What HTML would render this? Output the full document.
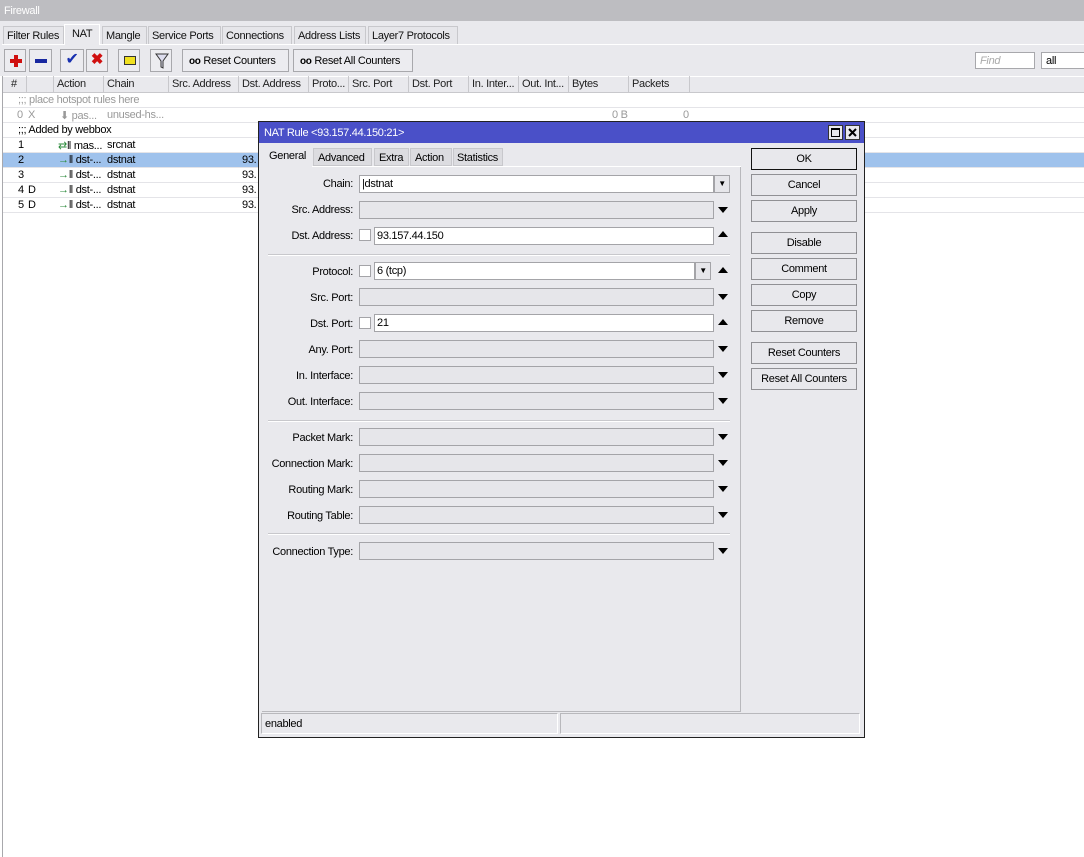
<!DOCTYPE html>
<html><head><meta charset="utf-8"><style>
*{box-sizing:border-box;margin:0;padding:0}
body{width:1084px;height:857px;position:relative;overflow:hidden;background:#fff;font-family:"Liberation Sans",sans-serif;font-size:11px;letter-spacing:-0.3px;color:#000}
div,span{white-space:nowrap}
.a{position:absolute;white-space:nowrap}
.tab{position:absolute;top:26px;height:18px;border:1px solid #c8c8cc;border-bottom:none;background:#e6e6ea;padding:3px 3px;color:#111;overflow:hidden}
.btn{position:absolute;top:49px;height:23px;border:1px solid #a8a8ac;background:#ececf0;overflow:hidden}
.th{position:absolute;top:76px;height:17px;border-right:1px solid #c8c8cc;padding:2px 3px;color:#222;overflow:hidden}
.row{position:absolute;left:3px;width:1081px;height:15px;border-bottom:1px solid #e4e4e8}
.c{position:absolute;top:1px}
.dlbl{position:absolute;width:93px;left:260px;text-align:right}
.inp{position:absolute;left:359px;width:355px;height:18px;border:1px solid #a4a4a8;background:#e6e6ea}
.inp.w{background:#fff}
.arr{position:absolute;left:718px;width:0;height:0;border-left:5px solid transparent;border-right:5px solid transparent}
.dn{border-top:6px solid #000}
.up{border-bottom:6px solid #000}
.dbtn{position:absolute;left:751px;width:106px;height:22px;border:1px solid #909094;background:#e8e8ec;text-align:center;line-height:20px}
.sep{position:absolute;left:268px;width:462px;height:2px;border-top:1px solid #c8c8cc;border-bottom:1px solid #fff}
.cb{position:absolute;left:359px;width:12px;height:12px;border:1px solid #a4a4a8;background:#fff}
.dd{position:absolute;width:16px;height:18px;border:1px solid #a4a4a8;background:#e6e6ea;font-size:8px;text-align:center;line-height:16px}
</style></head><body>
<div class="a" style="left:0;top:0;width:1084px;height:21px;background:#bdbdc1;color:#fff;padding:5px 4px">Firewall</div>
<div class="a" style="left:0;top:21px;width:1084px;height:55px;background:#e9e9ed"></div>
<div class="a" style="left:2px;top:44px;width:1082px;height:1px;background:#fff"></div>
<div class="tab" style="left:3px;width:61px">Filter Rules</div>
<div class="tab" style="left:64px;top:24px;height:21px;width:36px;background:#e9e9ed;border-color:#fff;padding-left:7px">NAT</div>
<div class="tab" style="left:102px;width:45px">Mangle</div>
<div class="tab" style="left:148px;width:73px">Service Ports</div>
<div class="tab" style="left:222px;width:70px">Connections</div>
<div class="tab" style="left:294px;width:72px">Address Lists</div>
<div class="tab" style="left:368px;width:90px">Layer7 Protocols</div>

<div class="btn" style="left:4px;width:22px"><div class="a" style="left:5px;top:9px;width:12px;height:4px;background:#d01010"></div><div class="a" style="left:9px;top:5px;width:4px;height:12px;background:#d01010"></div></div>
<div class="btn" style="left:29px;width:23px"><div class="a" style="left:5px;top:9px;width:12px;height:4px;background:#1828a0"></div></div>
<div class="btn" style="left:60px;width:24px;color:#1830b0;font-size:16px;text-align:center;line-height:20px">✔</div>
<div class="btn" style="left:86px;width:22px;color:#d01010;font-size:15px;text-align:center;line-height:20px;font-weight:bold">✖</div>
<div class="btn" style="left:118px;width:22px"><div class="a" style="left:5px;top:6px;width:12px;height:9px;background:#f0e020;border:1px solid #333"></div></div>
<div class="btn" style="left:150px;width:22px"><svg class="a" style="left:4px;top:3px" width="14" height="16"><path d="M1 1H13L8 8V15L6 14V8Z" fill="#dde" stroke="#333"/></svg></div>
<div class="btn" style="left:182px;width:107px;padding:5px 6px"><b style="font-size:10px">oo</b> Reset Counters</div>
<div class="btn" style="left:293px;width:120px;padding:5px 6px"><b style="font-size:10px">oo</b> Reset All Counters</div>
<div class="a" style="left:975px;top:52px;width:60px;height:17px;border:1px solid #a8a8ac;background:#fff;color:#aaa;font-style:italic;padding:2px 4px">Find</div>
<div class="a" style="left:1041px;top:52px;width:50px;height:17px;border:1px solid #a8a8ac;background:#fff;padding:2px 4px">all</div>

<div class="a" style="left:3px;top:76px;width:1081px;height:17px;background:#e9e9ed;border-top:1px solid #fff;border-bottom:1px solid #c8c8cc"></div>
<div class="th" style="left:3px;width:24px;padding-left:8px">#</div>
<div class="th" style="left:27px;width:27px"></div>
<div class="th" style="left:54px;width:50px">Action</div>
<div class="th" style="left:104px;width:65px">Chain</div>
<div class="th" style="left:169px;width:70px">Src. Address</div>
<div class="th" style="left:239px;width:70px">Dst. Address</div>
<div class="th" style="left:309px;width:40px">Proto...</div>
<div class="th" style="left:349px;width:60px">Src. Port</div>
<div class="th" style="left:409px;width:60px">Dst. Port</div>
<div class="th" style="left:469px;width:50px">In. Inter...</div>
<div class="th" style="left:519px;width:50px">Out. Int...</div>
<div class="th" style="left:569px;width:60px">Bytes</div>
<div class="th" style="left:629px;width:61px">Packets</div>
<div class="a" style="left:2px;top:76px;width:1px;height:781px;background:#a8a8ac"></div>

<div class="row" style="top:93px;color:#999"><span class="c" style="left:15px">;;; place hotspot rules here</span></div>
<div class="row" style="top:108px;color:#999"><span class="c" style="left:14px">0</span><span class="c" style="left:25px">X</span><span class="c" style="left:57px">⬇ pas...</span><span class="c" style="left:104px">unused-hs...</span><span class="c" style="left:609px">0 B</span><span class="c" style="left:680px">0</span></div>
<div class="row" style="top:123px"><span class="c" style="left:15px">;;; Added by webbox</span></div>
<div class="row" style="top:138px"><span class="c" style="left:15px">1</span><span class="c" style="left:55px"><span style="color:#2a8a3a">⇄</span>‖ mas...</span><span class="c" style="left:104px">srcnat</span></div>
<div class="row" style="top:153px;background:#9fc2ec"><span class="c" style="left:15px">2</span><span class="c" style="left:55px"><span style="color:#2a8a3a">→</span>‖ dst-...</span><span class="c" style="left:104px">dstnat</span><span class="c" style="left:239px">93.</span></div>
<div class="row" style="top:168px"><span class="c" style="left:15px">3</span><span class="c" style="left:55px"><span style="color:#2a8a3a">→</span>‖ dst-...</span><span class="c" style="left:104px">dstnat</span><span class="c" style="left:239px">93.</span></div>
<div class="row" style="top:183px"><span class="c" style="left:15px">4</span><span class="c" style="left:25px">D</span><span class="c" style="left:55px"><span style="color:#2a8a3a">→</span>‖ dst-...</span><span class="c" style="left:104px">dstnat</span><span class="c" style="left:239px">93.</span></div>
<div class="row" style="top:198px"><span class="c" style="left:15px">5</span><span class="c" style="left:25px">D</span><span class="c" style="left:55px"><span style="color:#2a8a3a">→</span>‖ dst-...</span><span class="c" style="left:104px">dstnat</span><span class="c" style="left:239px">93.</span></div>

<div class="a" style="left:258px;top:121px;width:607px;height:617px;background:#e9e9ed;border:1px solid #222"></div>
<div class="a" style="left:259px;top:122px;width:605px;height:21px;background:#4a50c8;color:#fff;padding:5px 5px">NAT Rule &lt;93.157.44.150:21&gt;</div>
<div class="a" style="left:828px;top:125px;width:15px;height:15px;background:#e9e9ed;border:1px solid #333"><div class="a" style="left:2px;top:2px;width:9px;height:9px;border:1px solid #000;border-top-width:2px"></div></div>
<div class="a" style="left:845px;top:125px;width:15px;height:15px;background:#e9e9ed;border:1px solid #333"><svg class="a" style="left:2px;top:2px" width="9" height="9"><path d="M1 1L8 8M8 1L1 8" stroke="#000" stroke-width="2"/></svg></div>

<div class="a" style="left:262px;top:166px;width:479px;height:546px;border:1px solid #b8b8bc;border-left:none;border-top:none"></div>
<div class="a" style="left:312px;top:166px;width:429px;height:1px;background:#fff"></div>
<div class="a" style="left:264px;top:146px;width:48px;height:21px;padding:4px 5px">General</div>
<div class="a" style="left:313px;top:148px;width:59px;height:18px;border:1px solid #c8c8cc;padding:3px 4px;background:#dcdce0">Advanced</div>
<div class="a" style="left:374px;top:148px;width:35px;height:18px;border:1px solid #c8c8cc;padding:3px 4px;background:#dcdce0">Extra</div>
<div class="a" style="left:410px;top:148px;width:42px;height:18px;border:1px solid #c8c8cc;padding:3px 4px;background:#dcdce0">Action</div>
<div class="a" style="left:453px;top:148px;width:50px;height:18px;border:1px solid #c8c8cc;padding:3px 3px;background:#dcdce0">Statistics</div>

<div class="dlbl" style="top:178px">Chain:</div><div class="inp w" style="top:175px;width:355px;padding:2px 2px">|dstnat</div><div class="dd" style="left:714px;top:175px">▼</div>
<div class="dlbl" style="top:204px">Src. Address:</div><div class="inp" style="top:201px"></div><div class="arr dn" style="top:207px"></div>
<div class="dlbl" style="top:230px">Dst. Address:</div><div class="cb" style="top:229px"></div><div class="inp w" style="left:374px;width:340px;top:227px;padding:2px 2px">93.157.44.150</div><div class="arr up" style="top:231px"></div>
<div class="sep" style="top:254px"></div>
<div class="dlbl" style="top:266px">Protocol:</div><div class="cb" style="top:265px"></div><div class="inp w" style="left:374px;width:321px;top:262px;padding:2px 2px">6 (tcp)</div><div class="dd" style="left:695px;top:262px">▼</div><div class="arr up" style="top:267px"></div>
<div class="dlbl" style="top:292px">Src. Port:</div><div class="inp" style="top:288px"></div><div class="arr dn" style="top:294px"></div>
<div class="dlbl" style="top:318px">Dst. Port:</div><div class="cb" style="top:317px"></div><div class="inp w" style="left:374px;width:340px;top:314px;padding:2px 2px">21</div><div class="arr up" style="top:319px"></div>
<div class="dlbl" style="top:344px">Any. Port:</div><div class="inp" style="top:340px"></div><div class="arr dn" style="top:346px"></div>
<div class="dlbl" style="top:370px">In. Interface:</div><div class="inp" style="top:366px"></div><div class="arr dn" style="top:372px"></div>
<div class="dlbl" style="top:396px">Out. Interface:</div><div class="inp" style="top:392px"></div><div class="arr dn" style="top:398px"></div>
<div class="sep" style="top:420px"></div>
<div class="dlbl" style="top:432px">Packet Mark:</div><div class="inp" style="top:428px"></div><div class="arr dn" style="top:434px"></div>
<div class="dlbl" style="top:458px">Connection Mark:</div><div class="inp" style="top:454px"></div><div class="arr dn" style="top:460px"></div>
<div class="dlbl" style="top:484px">Routing Mark:</div><div class="inp" style="top:480px"></div><div class="arr dn" style="top:486px"></div>
<div class="dlbl" style="top:510px">Routing Table:</div><div class="inp" style="top:506px"></div><div class="arr dn" style="top:512px"></div>
<div class="sep" style="top:533px"></div>
<div class="dlbl" style="top:546px">Connection Type:</div><div class="inp" style="top:542px"></div><div class="arr dn" style="top:548px"></div>

<div class="dbtn" style="top:148px;border:1px solid #111">OK</div>
<div class="dbtn" style="top:174px">Cancel</div>
<div class="dbtn" style="top:200px">Apply</div>
<div class="dbtn" style="top:232px">Disable</div>
<div class="dbtn" style="top:258px">Comment</div>
<div class="dbtn" style="top:284px">Copy</div>
<div class="dbtn" style="top:310px">Remove</div>
<div class="dbtn" style="top:342px">Reset Counters</div>
<div class="dbtn" style="top:368px">Reset All Counters</div>

<div class="a" style="left:261px;top:713px;width:297px;height:21px;border:1px solid #b8b8bc;border-right-color:#fff;border-bottom-color:#fff;padding:4px 3px">enabled</div>
<div class="a" style="left:560px;top:713px;width:300px;height:21px;border:1px solid #b8b8bc;border-right-color:#fff;border-bottom-color:#fff"></div>
</body></html>
